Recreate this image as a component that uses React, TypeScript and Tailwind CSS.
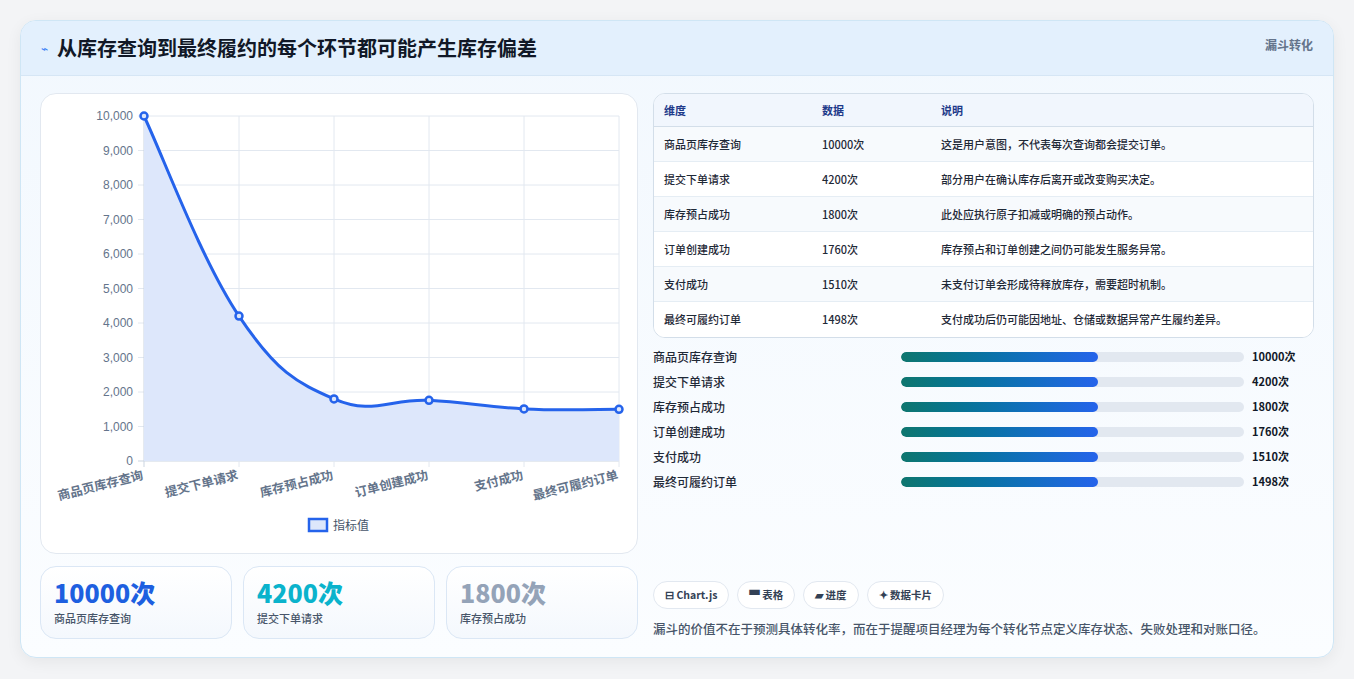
import React from "react";

const rows = [
  ["商品页库存查询", "10000次", "这是用户意图，不代表每次查询都会提交订单。"],
  ["提交下单请求", "4200次", "部分用户在确认库存后离开或改变购买决定。"],
  ["库存预占成功", "1800次", "此处应执行原子扣减或明确的预占动作。"],
  ["订单创建成功", "1760次", "库存预占和订单创建之间仍可能发生服务异常。"],
  ["支付成功", "1510次", "未支付订单会形成待释放库存，需要超时机制。"],
  ["最终可履约订单", "1498次", "支付成功后仍可能因地址、仓储或数据异常产生履约差异。"],
];
const vals = [10000, 4200, 1800, 1760, 1510, 1498];

function Chart() {
  const xs = [143, 238, 333, 428, 523, 618];
  const ys = vals.map((v) => 460 - v * 0.0345);
  const pts = xs.map((x, i) => [x, ys[i]]);
  const t = 0.4;
  let d = `M${pts[0][0]},${pts[0][1]}`;
  for (let i = 0; i < pts.length - 1; i++) {
    const p0 = pts[Math.max(0, i - 1)], p1 = pts[i], p2 = pts[i + 1], p3 = pts[Math.min(pts.length - 1, i + 2)];
    const c1 = [p1[0] + ((p2[0] - p0[0]) * t) / 2, p1[1] + ((p2[1] - p0[1]) * t) / 2];
    const c2 = [p2[0] - ((p3[0] - p1[0]) * t) / 2, p2[1] - ((p3[1] - p1[1]) * t) / 2];
    d += ` C${c1[0]},${c1[1]} ${c2[0]},${c2[1]} ${p2[0]},${p2[1]}`;
  }
  const area = d + ` L618,460 L143,460 Z`;
  const labels = ["商品页库存查询", "提交下单请求", "库存预占成功", "订单创建成功", "支付成功", "最终可履约订单"];
  return (
    <svg width="597" height="460" viewBox="40 93 597 460" style={{ fontFamily: "'Liberation Sans','Noto Sans CJK SC',sans-serif" }}>
      {Array.from({ length: 11 }).map((_, i) => {
        const y = 460 - i * 34.5;
        return (
          <g key={i}>
            <line x1={137} x2={618} y1={y} y2={y} stroke={i === 0 ? "#cbd5e1" : "#e2e8f0"} strokeWidth="1" />
            <text x={132} y={y + 4} textAnchor="end" fontSize="12" fill="#64748b">{(i * 1000).toLocaleString("en-US")}</text>
          </g>
        );
      })}
      {xs.map((x, i) => (
        <line key={i} x1={x} x2={x} y1={115} y2={466} stroke={i === 0 ? "#cbd5e1" : "#e2e8f0"} />
      ))}
      <path d={area} fill="#dde7fb" />
      <path d={d} fill="none" stroke="#2563eb" strokeWidth="3" />
      {pts.map(([x, y], i) => (
        <circle key={i} cx={x} cy={y} r="3.5" fill="#dde7fb" stroke="#2563eb" strokeWidth="2.5" />
      ))}
      {labels.map((l, i) => (
        <text key={i} x={xs[i]} y={478} textAnchor="end" fontSize="12.5" fontWeight="700" fill="#64748b" transform={`rotate(-14 ${xs[i]} 478)`} style={{ fontFamily: "'Noto Sans CJK SC',sans-serif" }}>{l}</text>
      ))}
      <rect x={308} y={518} width={18} height={12} fill="#dde7fb" stroke="#2563eb" strokeWidth="2.5" />
      <text x={332} y={529} fontSize="12" fill="#475569" style={{ fontFamily: "'Noto Sans CJK SC',sans-serif" }}>指标值</text>
    </svg>
  );
}

export default function App() {
  return (
    <div className="w-[1354px] h-[679px] bg-[#f3f4f6] pt-5 px-5" style={{ fontFamily: "'Noto Sans CJK SC',sans-serif" }}>
      <div className="w-[1314px] h-[638px] rounded-2xl border border-[#cfe6f5] bg-gradient-to-b from-[#f2f8fe] to-[#fbfdff] overflow-hidden shadow-[0_4px_16px_rgba(0,0,0,0.06)] flex flex-col">
        <div className="h-[55px] shrink-0 bg-[#e3f0fd] border-b border-[#d6e6f5] flex items-center justify-between pl-5 pr-5">
          <div className="flex items-center gap-[9px]">
            <span className="text-[12px] text-[#3b82f6]">⌁</span>
            <h1 className="text-[20px] font-bold text-[#111827]">从库存查询到最终履约的每个环节都可能产生库存偏差</h1>
          </div>
          <span className="text-[12px] font-bold text-[#64748b] self-start mt-[15px]">漏斗转化</span>
        </div>
        <div className="flex gap-[15px] px-[19px] pt-[17px] pb-[19px] flex-1">
          <div className="w-[598px] flex flex-col gap-[12px]">
            <div className="h-[461px] rounded-2xl border border-[#e2e8f0] bg-white overflow-hidden">
              <Chart />
            </div>
            <div className="grid grid-cols-3 gap-[11px]">
              {[
                ["10000次", "商品页库存查询", "text-[#1d5fe0]"],
                ["4200次", "提交下单请求", "text-[#0ab3cc]"],
                ["1800次", "库存预占成功", "text-[#94a3b8]"],
              ].map(([v, l, c]) => (
                <div key={l} className="h-[73px] rounded-2xl border border-[#dbe7f5] bg-gradient-to-b from-white to-[#f4f8fd] px-[13px] pt-[9px]">
                  <div className={`text-[25px] leading-[32px] font-black ${c}`}>{v}</div>
                  <div className="text-[11px] font-medium text-[#475569] mt-[2px]">{l}</div>
                </div>
              ))}
            </div>
          </div>
          <div className="flex-1 flex flex-col">
            <div className="rounded-xl border border-[#d3dee9] bg-white overflow-hidden">
              <div className="h-[33px] bg-[#f1f6fd] border-b border-[#d3dee9] flex items-center text-[11px] font-bold text-[#1e3a8a]">
                <div className="w-[168px] pl-[10px]">维度</div>
                <div className="w-[119px]">数据</div>
                <div>说明</div>
              </div>
              {rows.map((r, i) => (
                <div key={i} className={`h-[35px] flex items-center text-[11px] font-medium text-[#1f2937] ${i < 5 ? "border-b border-[#e5edf4]" : ""} ${i % 2 === 0 ? "bg-[#f7fafd]" : "bg-white"}`}>
                  <div className="w-[168px] pl-[10px]">{r[0]}</div>
                  <div className="w-[119px]">{r[1]}</div>
                  <div>{r[2]}</div>
                </div>
              ))}
            </div>
            <div className="mt-[6px] flex flex-col">
              {rows.map((r, i) => (
                <div key={i} className="h-[25px] flex items-center text-[12px]">
                  <div className="w-[248px] font-medium text-[#1f2937]">{r[0]}</div>
                  <div className="w-[343px] h-[10px] rounded-full bg-[#e2e8f0] overflow-hidden">
                    <div className="h-full w-[197px] rounded-full bg-gradient-to-r from-[#0f766e] to-[#2563eb]" />
                  </div>
                  <div className="ml-[8px] text-[11px] font-bold text-[#111827]">{r[1]}</div>
                </div>
              ))}
            </div>
            <div className="mt-auto">
              <div className="flex gap-[8px]">
                {["⊟ Chart.js", "▀ 表格", "▰ 进度", "✦ 数据卡片"].map((c) => (
                  <span key={c} className="h-[28px] px-[11px] rounded-full border border-[#e2e8f0] bg-white flex items-center text-[10.5px] font-bold text-[#334155]">{c}</span>
                ))}
              </div>
              <p className="mt-[11px] text-[12.5px] font-medium text-[#475569]">漏斗的价值不在于预测具体转化率，而在于提醒项目经理为每个转化节点定义库存状态、失败处理和对账口径。</p>
            </div>
          </div>
        </div>
      </div>
    </div>
  );
}
